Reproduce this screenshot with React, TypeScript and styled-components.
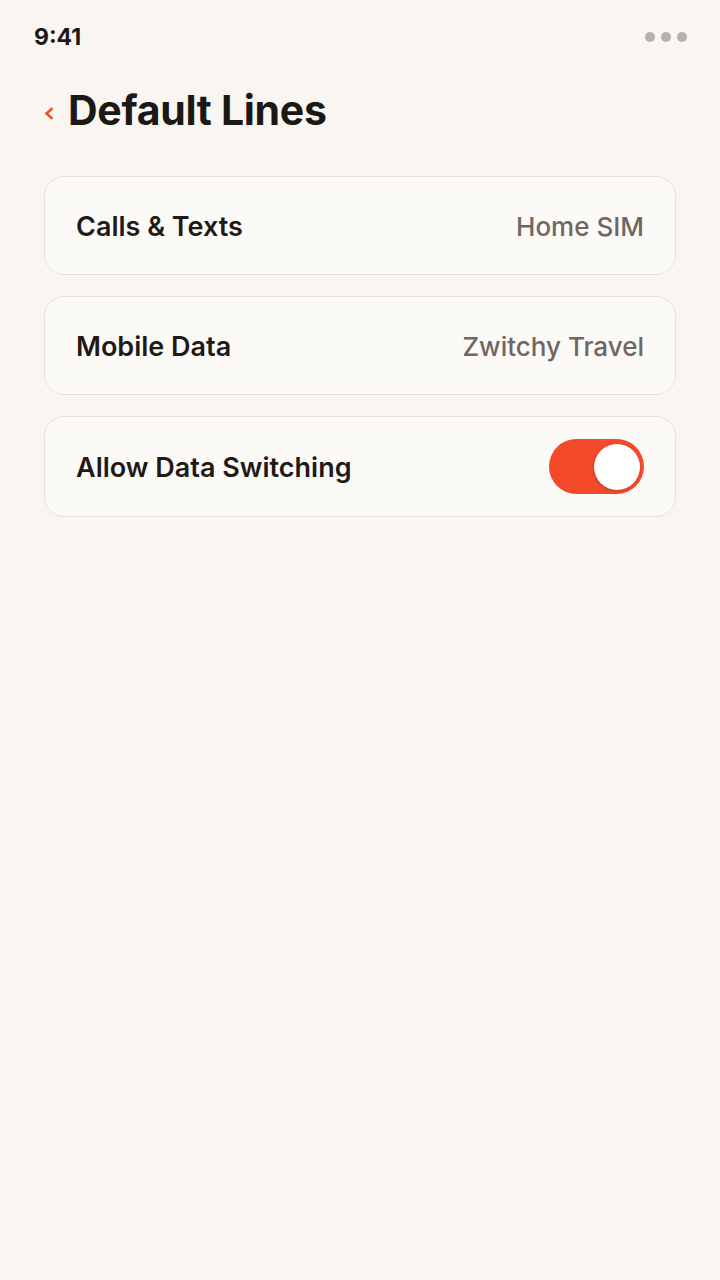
import React from 'react';
import styled, { createGlobalStyle } from 'styled-components';

const GlobalStyle = createGlobalStyle`
  html, body {
    margin: 0;
    padding: 0;
    background: #f9f6f2;
  }
  body {
    font-family: 'Inter', 'Noto Sans', sans-serif;
    -webkit-font-smoothing: antialiased;
  }
`;

const rows = [
  { label: 'Calls & Texts', value: 'Home SIM' },
  { label: 'Mobile Data', value: 'Zwitchy Travel' },
];

const App: React.FC = () => {
  return (
    <>
      <GlobalStyle />
      <Screen>
        <StatusBar>
          <Time>9:41</Time>
          <Dots>
            <Dot />
            <Dot />
            <Dot />
          </Dots>
        </StatusBar>
        <Header>
          <BackButton aria-label="Back">
            <svg width="10" height="13" viewBox="0 0 10 13">
              <path
                d="M7.5 2 L2.5 6.5 L7.5 11"
                fill="none"
                stroke="#f04a2a"
                strokeWidth="2.6"
                strokeLinecap="square"
              />
            </svg>
          </BackButton>
          <Title>Default Lines</Title>
        </Header>
        <List>
          {rows.map((r) => (
            <Card key={r.label}>
              <Label>{r.label}</Label>
              <Value>{r.value}</Value>
            </Card>
          ))}
          <Card tall>
            <Label>Allow Data Switching</Label>
            <Toggle role="switch" aria-checked="true">
              <Knob />
            </Toggle>
          </Card>
        </List>
      </Screen>
    </>
  );
};

export default App;

const Screen = styled.div`
  width: 720px;
  min-height: 1280px;
  background: #f9f6f2;
  padding: 0 44px;
  box-sizing: border-box;
`;

const StatusBar = styled.div`
  display: flex;
  justify-content: space-between;
  align-items: center;
  height: 74px;
  margin-left: -10px;
`;

const Time = styled.div`
  font-size: 23px;
  font-weight: 700;
  color: #1c1815;
`;

const Dots = styled.div`
  display: flex;
  gap: 6px;
  margin-right: -11px;
`;

const Dot = styled.span`
  width: 10px;
  height: 10px;
  border-radius: 50%;
  background: #b7b0a9;
`;

const Header = styled.div`
  display: flex;
  align-items: center;
  gap: 14px;
  height: 72px;
  margin-bottom: 30px;
`;

const BackButton = styled.button`
  border: none;
  background: none;
  padding: 0;
  display: flex;
  align-items: center;
  cursor: pointer;
  margin-top: 6px;
`;

const Title = styled.h1`
  margin: 0;
  font-size: 41px;
  font-weight: 700;
  letter-spacing: -0.3px;
  color: #1c1815;
`;

const List = styled.div`
  display: flex;
  flex-direction: column;
  gap: 21px;
`;

const Card = styled.div<{ tall?: boolean }>`
  display: flex;
  justify-content: space-between;
  align-items: center;
  height: ${(p) => (p.tall ? '101px' : '99px')};
  box-sizing: border-box;
  padding: 2px 31px 0;
  background: #fcfaf7;
  border: 1px solid #e9e1d9;
  border-radius: 20px;
`;

const Label = styled.div`
  font-size: 27px;
  font-weight: 600;
  color: #1f1a17;
`;

const Value = styled.div`
  font-size: 26px;
  font-weight: 500;
  color: #6f6762;
`;

const Toggle = styled.div`
  width: 95px;
  height: 55px;
  margin-top: -2px;
  border-radius: 28px;
  background: #f24a2b;
  display: flex;
  align-items: center;
  justify-content: flex-end;
  padding: 0 4px;
  box-sizing: border-box;
`;

const Knob = styled.span`
  width: 46px;
  height: 46px;
  border-radius: 50%;
  background: #ffffff;
  box-shadow: -1px 1px 3px rgba(0, 0, 0, 0.15);
`;
